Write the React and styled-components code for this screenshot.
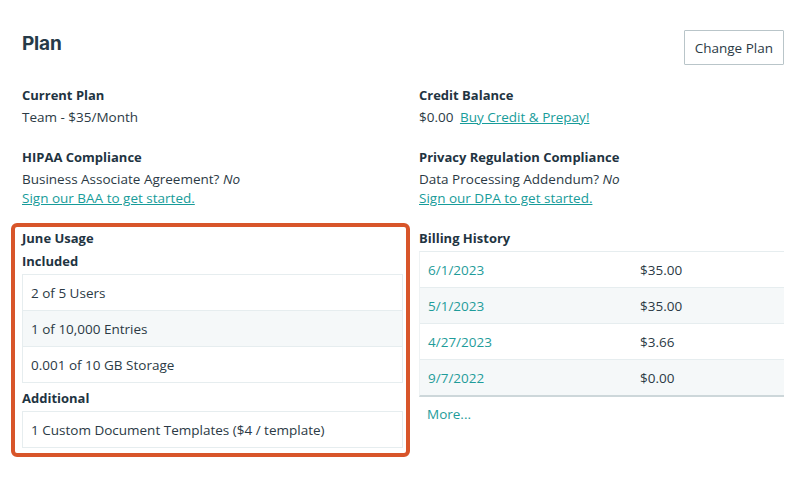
import React from 'react'
import styled, { createGlobalStyle } from 'styled-components'

const GlobalStyle = createGlobalStyle`
    body {
        margin: 0;
        background: #ffffff;
        font-family: "Open Sans", "Noto Sans", sans-serif;
        color: #2b3a45;
    }
`;

const included = ["2 of 5 Users", "1 of 10,000 Entries", "0.001 of 10 GB Storage"];
const additional = ["1 Custom Document Templates ($4 / template)"];
const billing = [
    { date: "6/1/2023", amount: "$35.00" },
    { date: "5/1/2023", amount: "$35.00" },
    { date: "4/27/2023", amount: "$3.66" },
    { date: "9/7/2022", amount: "$0.00" },
];

const App = () => {
    return (
        <Page>
            <GlobalStyle />
            <Header>
                <Title>Plan</Title>
                <Button type="button">Change Plan</Button>
            </Header>
            <Grid>
                <Section>
                    <Heading>Current Plan</Heading>
                    <Text>Team - $35/Month</Text>
                </Section>
                <Section>
                    <Heading>Credit Balance</Heading>
                    <Text>$0.00 <Link href="#" $gap>Buy Credit &amp; Prepay!</Link></Text>
                </Section>
                <Section>
                    <Heading>HIPAA Compliance</Heading>
                    <Text>Business Associate Agreement? <em>No</em></Text>
                    <Text><Link href="#">Sign our BAA to get started.</Link></Text>
                </Section>
                <Section>
                    <Heading>Privacy Regulation Compliance</Heading>
                    <Text>Data Processing Addendum? <em>No</em></Text>
                    <Text><Link href="#">Sign our DPA to get started.</Link></Text>
                </Section>
                <Highlight>
                    <Heading>June Usage</Heading>
                    <Heading>Included</Heading>
                    <List>
                        {included.map((item, i) => (
                            <ListRow key={item} $striped={i % 2 === 1}>{item}</ListRow>
                        ))}
                    </List>
                    <SubHeading>Additional</SubHeading>
                    <List>
                        {additional.map(item => (
                            <ListRow key={item}>{item}</ListRow>
                        ))}
                    </List>
                </Highlight>
                <Section>
                    <Heading>Billing History</Heading>
                    <Table>
                        {billing.map((row, i) => (
                            <TableRow key={row.date} $striped={i % 2 === 1}>
                                <DateCell>{row.date}</DateCell>
                                <AmountCell>{row.amount}</AmountCell>
                            </TableRow>
                        ))}
                    </Table>
                    <More href="#">More...</More>
                </Section>
            </Grid>
        </Page>
    )
}

const Page = styled.div`
    width: 800px;
    height: 484px;
    box-sizing: border-box;
    padding: 30px 16px 0 22px;
    overflow: hidden;
`;

const Header = styled.div`
    display: flex;
    justify-content: space-between;
    align-items: flex-start;
    height: 34px;
`;

const Title = styled.h1`
    margin: 2px 0 0;
    font-family: "Inter", "Lato", sans-serif;
    font-size: 19px;
    line-height: 24px;
    font-weight: 700;
    color: #263a48;
    letter-spacing: -0.2px;
`;

const Button = styled.button`
    height: 35px;
    padding: 0 10px;
    background: #ffffff;
    border: 1px solid #b9c5c9;
    border-radius: 1px;
    font-family: "Open Sans", "Noto Sans", sans-serif;
    font-size: 13.5px;
    color: #2b3a45;
`;

const Grid = styled.div`
    margin-top: 21px;
    display: grid;
    grid-template-columns: 381px 365px;
    column-gap: 16px;
    row-gap: 20px;
`;

const Section = styled.div`
    display: flex;
    flex-direction: column;
    min-width: 0;
`;

const Heading = styled.div`
    font-size: 13px;
    line-height: 20px;
    font-weight: 700;
    color: #1f3442;
    & + & {
        margin-top: 3px;
    }
    & + div:not(&) {
        margin-top: 3px;
    }
`;

const SubHeading = styled(Heading)`
    margin-top: 5px;
`;

const Text = styled.div`
    font-size: 13.5px;
    line-height: 19px;
    color: #2b3a45;
    ${Heading} + & {
        margin-top: 5px;
    }
`;

const Link = styled.a`
    color: #179c9a;
    text-decoration: underline;
    margin-left: ${props => props.$gap ? '3px' : '0'};
`;

const Highlight = styled(Section)`
    margin: -5px -7px 0 -11px;
    padding: 1px 3px 5px 7px;
    border: 4px solid #d8552a;
    border-radius: 6px;
`;

const List = styled.div`
    border: 1px solid #e6edef;
`;

const ListRow = styled.div`
    height: 35px;
    display: flex;
    align-items: center;
    padding: 0 8px;
    font-size: 13.5px;
    background: ${props => props.$striped ? '#f5f8f9' : '#ffffff'};
    & + & {
        border-top: 1px solid #e6edef;
    }
`;

const Table = styled.div`
    border-top: 1px solid #e6edef;
    border-left: 1px solid #eef2f3;
    border-bottom: 2px solid #cdd7da;
`;

const TableRow = styled.div`
    display: grid;
    grid-template-columns: 212px 1fr;
    height: 35px;
    align-items: center;
    padding: 0 8px;
    font-size: 13.5px;
    background: ${props => props.$striped ? '#f5f8f9' : '#ffffff'};
    & + & {
        border-top: 1px solid #e6edef;
    }
`;

const DateCell = styled.span`
    color: #1f9c9a;
`;

const AmountCell = styled.span`
    color: #2b3a45;
`;

const More = styled.a`
    margin-top: 8px;
    padding-left: 8px;
    font-size: 13.5px;
    line-height: 19px;
    color: #1f9c9a;
    text-decoration: none;
`;

export default App;
